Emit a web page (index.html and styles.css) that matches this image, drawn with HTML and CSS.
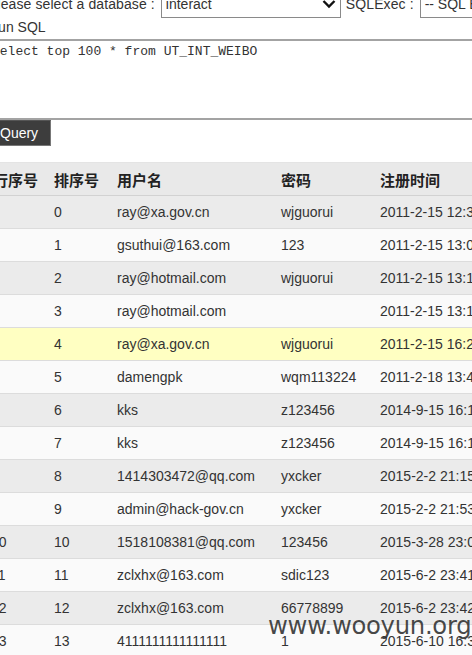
FILE: index.html
```html
<!DOCTYPE html>
<html>
<head>
<meta charset="utf-8">
<link rel="stylesheet" href="styles.css">
</head>
<body>
<div class="page">
  <div class="toolbar">
    <span class="label">Please select a database :</span>
    <span class="selectbox db">interact<svg class="chev" width="14" height="10" viewBox="0 0 14 10"><path d="M1.5 2 L7 7.5 L12.5 2" fill="none" stroke="#111" stroke-width="2.4"/></svg></span>
    <span class="label">SQLExec :</span>
    <span class="selectbox exec">-- SQL Exec --</span>
  </div>
  <div class="runlabel">Run SQL</div>
  <div class="sqlbox">select top 100 * from UT_INT_WEIBO</div>
  <button class="query">Query</button>
  <table class="grid">
    <colgroup>
      <col class="c1"><col class="c2"><col class="c3"><col class="c4"><col class="c5">
    </colgroup>
    <thead>
      <tr><th>行序号</th><th>排序号</th><th>用户名</th><th>密码</th><th>注册时间</th></tr>
    </thead>
    <tbody>
      <tr class="alt"><td>0</td><td>0</td><td>ray@xa.gov.cn</td><td>wjguorui</td><td>2011-2-15 12:38:41</td></tr>
      <tr><td>1</td><td>1</td><td>gsuthui@163.com</td><td>123</td><td>2011-2-15 13:02:17</td></tr>
      <tr class="alt"><td>2</td><td>2</td><td>ray@hotmail.com</td><td>wjguorui</td><td>2011-2-15 13:10:05</td></tr>
      <tr><td>3</td><td>3</td><td>ray@hotmail.com</td><td></td><td>2011-2-15 13:12:44</td></tr>
      <tr class="hl"><td>4</td><td>4</td><td>ray@xa.gov.cn</td><td>wjguorui</td><td>2011-2-15 16:20:33</td></tr>
      <tr><td>5</td><td>5</td><td>damengpk</td><td>wqm113224</td><td>2011-2-18 13:45:09</td></tr>
      <tr class="alt"><td>6</td><td>6</td><td>kks</td><td>z123456</td><td>2014-9-15 16:11:52</td></tr>
      <tr><td>7</td><td>7</td><td>kks</td><td>z123456</td><td>2014-9-15 16:12:08</td></tr>
      <tr class="alt"><td>8</td><td>8</td><td>1414303472@qq.com</td><td>yxcker</td><td>2015-2-2 21:15:27</td></tr>
      <tr><td>9</td><td>9</td><td>admin@hack-gov.cn</td><td>yxcker</td><td>2015-2-2 21:53:10</td></tr>
      <tr class="alt"><td>10</td><td>10</td><td>1518108381@qq.com</td><td>123456</td><td>2015-3-28 23:06:44</td></tr>
      <tr><td>11</td><td>11</td><td>zclxhx@163.com</td><td>sdic123</td><td>2015-6-2 23:41:19</td></tr>
      <tr class="alt"><td>12</td><td>12</td><td>zclxhx@163.com</td><td>66778899</td><td>2015-6-2 23:42:02</td></tr>
      <tr><td>13</td><td>13</td><td>4111111111111111</td><td>1</td><td>2015-6-10 16:30:25</td></tr>
    </tbody>
  </table>
</div>
<div class="watermark">www.wooyun.org</div>
</body>
</html>
```
FILE: styles.css
```css
html, body {
  margin: 0;
  padding: 0;
  overflow: hidden;
  background: #ffffff;
}
body {
  width: 472px;
  height: 655px;
  position: relative;
  font-family: "Liberation Sans", Arial, sans-serif;
  font-size: 14px;
  color: #333;
}
.page {
  margin: -11px 0 0 -12px;
  width: 620px;
}
.toolbar {
  display: flex;
  align-items: center;
  height: 29px;
  white-space: nowrap;
}
.label {
  margin-right: 6px;
  letter-spacing: 0.1px;
}
.selectbox {
  display: flex;
  align-items: center;
  height: 29px;
  box-sizing: border-box;
  border: 1px solid #8a8a8a;
  padding: 0 4px;
  background: #fff;
  color: #333;
}
.selectbox.db {
  width: 180px;
  justify-content: space-between;
  margin-right: 5px;
}
.selectbox.exec {
  width: 140px;
}
.runlabel {
  height: 18px;
  line-height: 18px;
}
.sqlbox {
  margin-top: 3px;
  height: 81px;
  box-sizing: border-box;
  border-top: 2px solid #a3a3a3;
  border-bottom: 2px solid #a3a3a3;
  padding: 2px 0 0 4px;
  font-family: "Liberation Mono", "Courier New", monospace;
  font-size: 13px;
  line-height: 17px;
  color: #333;
}
.query {
  display: block;
  margin: 0 0 16px 0;
  height: 26px;
  padding: 0 12px 0 11px;
  background: #3d3d3d;
  color: #fff;
  border: 1px solid #777;
  border-top-color: #555;
  font-family: "Liberation Sans", Arial, sans-serif;
  font-size: 14px;
  line-height: 24px;
}
.grid {
  border-collapse: collapse;
  table-layout: fixed;
  width: 600px;
  margin-left: -3px;
}
.c1 { width: 61px; }
.c2 { width: 63px; }
.c3 { width: 164px; }
.c4 { width: 99px; }
.c5 { width: 213px; }
.grid th, .grid td {
  height: 32px;
  padding: 0 0 0 8px;
  text-align: left;
  white-space: nowrap;
  overflow: hidden;
  border-bottom: 1px solid #dcdcdc;
}
.grid td:first-child {
  padding-left: 6px;
}
.grid th {
  background: #e9e9e9;
  font-family: "Noto Sans CJK SC", sans-serif;
  font-weight: bold;
  font-size: 15px;
  color: #222;
  border-top: 1px solid #e4e4e4;
  border-bottom: 1px solid #d2d2d2;
}
.grid tbody tr {
  background: #fafafa;
}
.grid tbody tr.alt {
  background: #ebebeb;
}
.grid tbody tr.hl {
  background: #ffffc2;
}
.watermark {
  position: absolute;
  left: 268px;
  top: 611px;
  font-family: "DejaVu Sans", sans-serif;
  font-size: 24.3px;
  color: rgba(40, 40, 40, 0.85);
  letter-spacing: -0.3px;
}
```
